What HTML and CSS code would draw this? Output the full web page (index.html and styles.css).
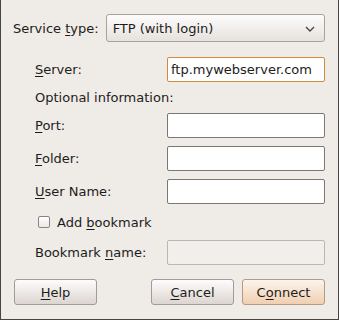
FILE: index.html
```html
<!DOCTYPE html>
<html>
<head>
<meta charset="utf-8">
<link rel="stylesheet" href="styles.css">
</head>
<body>
<div class="dialog">
  <div class="service-row">
    <span class="label">Service <u>t</u>ype:</span>
    <div class="combo">
      <span>FTP (with login)</span>
      <svg class="chevron" width="10" height="6" viewBox="0 0 10 6"><path d="M1 1 L5 5 L9 1" fill="none" stroke="#4a4644" stroke-width="1.4"/></svg>
    </div>
  </div>
  <div class="form">
    <span class="label"><u>S</u>erver:</span>
    <div class="entry focus">ftp.mywebserver.com</div>
    <span class="label span2">Optional information:</span>
    <span class="label"><u>P</u>ort:</span>
    <div class="entry"></div>
    <span class="label"><u>F</u>older:</span>
    <div class="entry"></div>
    <span class="label"><u>U</u>ser Name:</span>
    <div class="entry"></div>
    <label class="check span2"><span class="box"></span><span>Add <u>b</u>ookmark</span></label>
    <span class="label">Bookmark <u>n</u>ame:</span>
    <div class="entry disabled"></div>
  </div>
  <div class="buttons">
    <div class="btn"><u>H</u>elp</div>
    <div class="spacer"></div>
    <div class="btn"><u>C</u>ancel</div>
    <div class="btn default">C<u>o</u>nnect</div>
  </div>
</div>
</body>
</html>
```
FILE: styles.css
```css
html, body {
  margin: 0;
  padding: 0;
  background: #efebe7;
}
.dialog {
  width: 339px;
  height: 320px;
  box-sizing: border-box;
  border: 1px solid #474442;
  border-top: none;
  background: #efebe7;
  font-family: "DejaVu Sans", sans-serif;
  font-size: 13px;
  color: #1e1c1b;
  display: flex;
  flex-direction: column;
}
u { text-decoration: underline; text-underline-offset: 2px; }
.service-row {
  display: flex;
  align-items: center;
  padding: 14px 13px 0 12px;
  gap: 7px;
}
.label { white-space: nowrap; align-self: center; line-height: 15px; }
.combo {
  flex: 1;
  height: 28px;
  box-sizing: border-box;
  border: 1px solid #a8a29d;
  border-radius: 3px;
  background: linear-gradient(#fdfcfc, #e6e1dd);
  display: flex;
  align-items: center;
  justify-content: space-between;
  padding: 0 9px 0 6px;
}
.chevron { margin-top: 1px; }
.form {
  display: grid;
  grid-template-columns: 132px 158px;
  row-gap: 8px;
  padding-left: 34px;
  margin-top: 15px;
}
.span2 { grid-column: 1 / 3; height: 15px; }
.entry {
  height: 25px;
  box-sizing: border-box;
  border: 1px solid #7d7773;
  border-radius: 2px;
  background: #ffffff;
  padding: 0 3px;
  display: flex;
  align-items: center;
}
.entry.focus { border-color: #d38a3c; }
.entry.disabled { background: #f1eeeb; border-color: #bcb6b1; }
.check {
  height: 20px;
  display: flex;
  align-items: center;
  padding-left: 3px;
  gap: 7px;
}
.box {
  width: 12px;
  height: 12px;
  box-sizing: border-box;
  border: 1px solid #8a8480;
  border-radius: 2px;
  background: linear-gradient(#ffffff, #ebe7e4);
}
.buttons {
  display: flex;
  padding: 0 13px 0 13px;
  margin-top: 14px;
  gap: 8px;
}
.spacer { flex: 1; }
.btn {
  width: 83px;
  height: 26px;
  box-sizing: border-box;
  border: 1px solid #a29c97;
  border-radius: 3px;
  background: linear-gradient(#fdfcfc, #dcd5d1);
  display: flex;
  align-items: center;
  justify-content: center;
}
.btn.default {
  border-color: #b59a86;
  background: linear-gradient(#fdf4ec, #efcfb1);
}
```
